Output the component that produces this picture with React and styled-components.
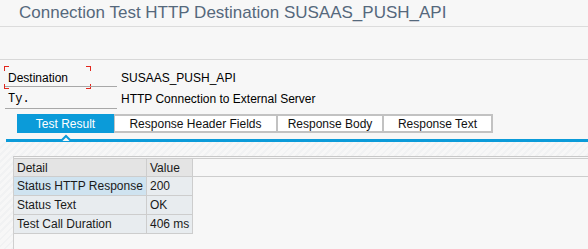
import React from 'react'
import styled, { createGlobalStyle } from 'styled-components'

const Global = createGlobalStyle`
  html, body { margin: 0; padding: 0; }
  body {
    background: #f7f7f7;
    font-family: "Liberation Sans", Arial, sans-serif;
    font-size: 12px;
    color: #000;
    overflow: hidden;
  }
`

const Page = styled.div`
  width: 588px;
  height: 249px;
  display: flex;
  flex-direction: column;
  overflow: hidden;
`

const TitleBar = styled.div`
  height: 26px;
  border-bottom: 1px solid #dcdcdc;
  padding-left: 19px;
  display: flex;
  align-items: center;
  font-size: 17px;
  color: #55687c;
  white-space: nowrap;
`

const Toolbar = styled.div`
  height: 32px;
  border-bottom: 1px solid #d8d8d8;
`

const Form = styled.div`
  padding: 6px 0 0 4px;
  display: flex;
  flex-direction: column;
`

const FieldRow = styled.div`
  display: flex;
  align-items: center;
  height: ${p => p.h}px;
`

const Label = styled.div`
  position: relative;
  width: 113px;
  height: 100%;
  display: flex;
  align-items: center;
  padding-left: 4px;
  box-sizing: border-box;
  font-family: ${p => (p.mono ? '"Liberation Mono", "Courier New", monospace' : 'inherit')};
  &::after {
    content: '';
    position: absolute;
    left: 1px;
    right: 0;
    bottom: ${p => (p.focused ? 2 : 0)}px;
    border-bottom: 1px solid #a8a8a8;
  }
`

const Corner = styled.span`
  position: absolute;
  width: 4px;
  height: 4px;
  border-color: #e3261c;
  border-style: solid;
  border-width: 0;
  ${p => p.top ? 'top: 0;' : 'bottom: 0;'}
  ${p => p.left ? 'left: 0;' : 'left: 82px;'}
  ${p => p.top ? 'border-top-width: 1.5px;' : 'border-bottom-width: 1.5px;'}
  ${p => p.left ? 'border-left-width: 1.5px;' : 'border-right-width: 1.5px;'}
`

const Value = styled.div`
  padding-left: 4px;
  white-space: nowrap;
`

const TabArea = styled.div`
  position: relative;
  margin-top: 5px;
  padding-left: 17px;
`

const TabStrip = styled.div`
  display: flex;
  height: 19px;
`

const Tab = styled.div`
  box-sizing: border-box;
  width: ${p => p.w}px;
  display: flex;
  align-items: center;
  justify-content: center;
  font-size: 12px;
  white-space: nowrap;
  background: ${p => (p.active ? '#0b9bd9' : '#fff')};
  color: ${p => (p.active ? '#fff' : '#111')};
  border: ${p => (p.active ? 'none' : '2px solid #c2c2c2')};
  border-left-width: ${p => (p.active ? 0 : 1)}px;
  border-right-width: ${p => (p.last ? 2 : 1)}px;
`

const BlueLine = styled.div`
  height: 3px;
  background: #0b9bd9;
  margin: 6px 0 0 -11px;
`

const Notch = styled.svg`
  position: absolute;
  left: 61px;
  top: 20px;
`

const Stripes = styled.div`
  height: 14px;
  background: repeating-linear-gradient(135deg, #f7f7f7 0 3px, #f1f2f3 3px 5px);
`

const Lower = styled.div`
  flex: 1;
  display: flex;
  background: repeating-linear-gradient(135deg, #f7f7f7 0 3px, #f1f2f3 3px 5px);
  padding-left: 13px;
`

const Panel = styled.div`
  flex: 1;
  background: #f7f7f7;
  border-left: 1px solid #cfcfcf;
  border-top: 1px solid #c8c8c8;
  padding-top: 1px;
`

const Grid = styled.div`
  display: grid;
  grid-template-columns: 133px 46px 1fr;
  border-top: 1px solid #cdcdcd;
`

const Cell = styled.div`
  height: ${p => (p.head ? 17 : 18)}px;
  display: flex;
  align-items: center;
  padding-left: 3px;
  white-space: nowrap;
  font-size: 12px;
  color: #1a1a1a;
  background: ${p => p.bg};
  border-bottom: 1px solid #cdcdcd;
  border-right: ${p => (p.fill ? 'none' : '1px solid #cdcdcd')};
  border-bottom-color: ${p => (p.fill && !p.head ? 'transparent' : '#cdcdcd')};
`

const rows = [
  ['Status HTTP Response', '200'],
  ['Status Text', 'OK'],
  ['Test Call Duration', '406 ms'],
]

const tabs = [
  { label: 'Test Result', w: 97, active: true },
  { label: 'Response Header Fields', w: 163 },
  { label: 'Response Body', w: 106 },
  { label: 'Response Text', w: 110, last: true },
]

export default function App() {
  return (
    <Page>
      <Global />
      <TitleBar>Connection Test HTTP Destination SUSAAS_PUSH_API</TitleBar>
      <Toolbar />
      <Form>
        <FieldRow h={23}>
          <Label focused>
            <Corner top left />
            <Corner top />
            <Corner left />
            <Corner />
            Destination
          </Label>
          <Value>SUSAAS_PUSH_API</Value>
        </FieldRow>
        <FieldRow h={20}>
          <Label mono>Ty.</Label>
          <Value>HTTP Connection to External Server</Value>
        </FieldRow>
      </Form>
      <TabArea>
        <TabStrip>
          {tabs.map(t => (
            <Tab key={t.label} w={t.w} active={t.active} last={t.last}>{t.label}</Tab>
          ))}
        </TabStrip>
        <BlueLine />
        <Notch width="10" height="7" viewBox="0 0 10 7">
          <path d="M0 7 L5 2 L10 7 Z" fill="#f7f7f7" />
          <path d="M0 7 L5 2 L10 7" fill="none" stroke="#0b9bd9" strokeWidth="2" />
        </Notch>
      </TabArea>
      <Stripes />
      <Lower>
        <Panel>
          <Grid>
            <Cell head bg="#e4e4e4">Detail</Cell>
            <Cell head bg="#e4e4e4">Value</Cell>
            <Cell head fill bg="#f7f7f7" />
            {rows.map(([d, v], i) => (
              <React.Fragment key={d}>
                <Cell bg={i === 0 ? '#cfe3f0' : '#e8ecef'}>{d}</Cell>
                <Cell bg="#e8ecef">{v}</Cell>
                <Cell fill bg="#f7f7f7" />
              </React.Fragment>
            ))}
          </Grid>
        </Panel>
      </Lower>
    </Page>
  )
}
